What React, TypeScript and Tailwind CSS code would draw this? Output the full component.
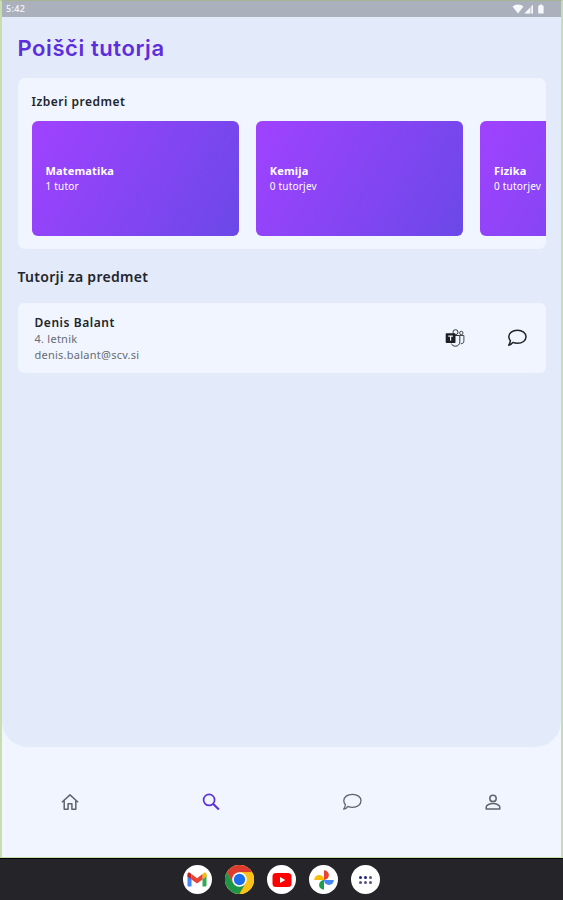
import React from 'react';

interface Subject {
  name: string;
  tutors: string;
}

const subjects: Subject[] = [
  { name: 'Matematika', tutors: '1 tutor' },
  { name: 'Kemija', tutors: '0 tutorjev' },
  { name: 'Fizika', tutors: '0 tutorjev' },
];

function ChatIcon({ className }: { className?: string }) {
  return (
    <svg viewBox="0 0 20 18" className={className} fill="none" stroke="currentColor" strokeLinejoin="round">
      <path d="M10.400 1.300c5 0 8.600 2.700 8.600 6.500s-3.600 6.500-8.600 6.500c-1.700 0-3.200-.3-4.500-.9-.9 1.400-2.200 2.400-4.200 2.800.9-1.300 1.500-2.700 1.700-4.500-1-1.100-1.600-2.400-1.600-3.900 0-3.800 3.600-6.500 8.600-6.500Z" />
    </svg>
  );
}

function TeamsIcon() {
  return (
    <svg viewBox="0 0 20 18" className="h-[18px] w-5 text-[#33363b]" fill="none" stroke="currentColor">
      <circle cx="10.500" cy="3.200" r="2.500" strokeWidth="1" />
      <circle cx="16.300" cy="4" r="1.700" strokeWidth=".9" />
      <path d="M10 6.500h4.800v6.200c0 2.700-1.700 4.500-4.400 4.500-2 0-3.400-1-4-2.600" strokeWidth="1" />
      <path d="M15 6.500h3.900v5.400c0 1.900-1.300 3-3.200 2.800" strokeWidth=".9" />
      <rect x="0.700" y="4.300" width="9.800" height="9.800" rx="0.800" fill="#1d1f23" stroke="none" />
      <path d="M3.300 7.100h4.600M5.600 7.100v4.700" stroke="#f0f5ff" strokeWidth="1.200" />
    </svg>
  );
}

function HomeIcon() {
  return (
    <svg viewBox="0 0 18 18" className="h-[18px] w-[18px]" fill="none" stroke="currentColor" strokeWidth="1.500">
      <path d="M.9 9.200 9 1.900l8.100 7.300M3.200 7.800v8.400h3.900v-5.400h3.800v5.400h3.900V7.800" strokeLinejoin="round" />
    </svg>
  );
}

function SearchIcon() {
  return (
    <svg viewBox="0 0 18 18" className="h-[18px] w-[18px]" fill="none" stroke="currentColor">
      <circle cx="7.100" cy="6.900" r="5.500" strokeWidth="1.700" />
      <path d="m11 10.800 5.900 5.800" strokeWidth="2.100" />
    </svg>
  );
}

function PersonIcon() {
  return (
    <svg viewBox="0 0 18 18" className="h-[18px] w-[18px]" fill="none" stroke="currentColor" strokeWidth="1.500">
      <circle cx="9" cy="5.400" r="3.200" />
      <path d="M2.200 15.900v-1.800c0-2.400 4-3.500 6.800-3.500s6.800 1.100 6.800 3.500v1.800Z" strokeLinejoin="round" />
    </svg>
  );
}

function StatusBar() {
  return (
    <div className="flex h-4 shrink-0 items-center justify-between bg-[#abb0bd] pr-[15px] pl-1 text-[#f7f8fb]">
      <span className="text-[9px] leading-4 font-medium tracking-[0.300px]">5:42</span>
      <svg viewBox="0 0 34 10" className="h-[10px] w-[34px]" fill="currentColor">
        <path d="M.500 2.600C3.600-.1 8.400-.1 11.500 2.600L6 9.400Z" />
        <path d="M21 .7v8.700h-8.600Z" fillOpacity=".45" />
        <path d="M18 3.700v5.700h-5.600Z" />
        <path d="M19.500 2.200 21 .7v8.700h-1.500Z" />
        <path d="M26.200 1.500h1.500V.5h2.400v1h1.500v8h-5.400Z" />
      </svg>
    </div>
  );
}

function SubjectCard({ subject }: { subject: Subject }) {
  return (
    <div className="flex h-[115px] w-[207.500px] shrink-0 flex-col justify-center rounded-[6px] bg-linear-[120deg,#a042ff,#6b48e8] pl-[14px] text-white">
      <div className="text-[11px] leading-[15px] font-bold tracking-[0.150px]">{subject.name}</div>
      <div className="text-[10px] leading-4 tracking-[0.200px]">{subject.tutors}</div>
    </div>
  );
}

function BottomNav() {
  return (
    <nav className="-mx-0.5 grid h-[109px] shrink-0 grid-cols-4 place-items-center text-[#5f646c]">
      <HomeIcon />
      <span className="text-[#5a32d8]">
        <SearchIcon />
      </span>
      <ChatIcon className="h-[18px] w-5 stroke-[1.300]" />
      <PersonIcon />
    </nav>
  );
}

function DockApp({ children }: { children: React.ReactNode }) {
  return <div className="flex h-[29px] w-[29px] items-center justify-center rounded-full bg-white">{children}</div>;
}

function Dock() {
  return (
    <div className="flex h-[42px] items-center justify-center gap-[13.200px] border-t border-black bg-[#252529]">
      <DockApp>
        <svg viewBox="0 0 20 15" className="h-[15px] w-5">
          <path d="M.500 2.500v10.700c0 .8.500 1.300 1.300 1.300h2.700V6Z" fill="#4285f4" />
          <path d="M19.500 2.500v10.700c0 .8-.5 1.300-1.300 1.300h-2.700V6Z" fill="#34a853" />
          <path d="M15.500 2 17 .9c1.100-.8 2.500 0 2.500 1.300v2.300l-4 3Z" fill="#fbbc04" />
          <path d="M4.500 2 3 .9C1.900.1.500.9.500 2.200v2.300l4 3Z" fill="#c5221f" />
          <path d="M4.500 2v5.500l5.500 4.100 5.500-4.100V2L10 6.200Z" fill="#ea4335" />
        </svg>
      </DockApp>
      <DockApp>
        <svg viewBox="0 0 48 48" className="h-[29px] w-[29px]">
          <circle cx="24" cy="24" r="24" fill="#fbc116" />
          <path d="M24 12h20.800A24 24 0 0 0 3.200 12L13.600 30Z" fill="#dc3c2e" />
          <path d="M34.400 30 24 48A24 24 0 0 1 3.200 12l10.400 18Z" fill="#1e9648" />
          <path d="M24 12h20.800A24 24 0 0 1 24 48l10.400-18Z" fill="#fbc116" />
          <circle cx="24" cy="24" r="12" fill="#fff" />
          <circle cx="24" cy="24" r="9.400" fill="#1a6fe8" />
        </svg>
      </DockApp>
      <DockApp>
        <svg viewBox="0 0 20 14" className="h-[14px] w-5">
          <rect x=".500" width="19" height="14" rx="3.500" fill="#ff0000" />
          <path d="m8 4 5.300 3L8 10Z" fill="#fff" />
        </svg>
      </DockApp>
      <DockApp>
        <svg viewBox="0 0 20 20" className="h-5 w-5">
          <path d="M10 10V.2a4.900 4.900 0 0 1 4.900 4.900A4.900 4.900 0 0 1 10 10Z" fill="#ea4335" />
          <path d="M10 10h9.800a4.900 4.900 0 0 1-9.800 0Z" fill="#4285f4" />
          <path d="M10 10v9.800a4.900 4.900 0 0 1 0-9.800Z" fill="#1e9e48" />
          <path d="M10 10H.2a4.900 4.900 0 0 1 9.800 0Z" fill="#fbbc04" />
        </svg>
      </DockApp>
      <DockApp>
        <div className="grid grid-cols-3 gap-[2px]">
          <i className="h-[3px] w-[3px] rounded-full bg-[#202080]" />
          <i className="h-[3px] w-[3px] rounded-full bg-[#202080]" />
          <i className="h-[3px] w-[3px] rounded-full bg-[#55557d]" />
          <i className="h-[3px] w-[3px] rounded-full bg-[#55557d]" />
          <i className="h-[3px] w-[3px] rounded-full bg-[#55557d]" />
          <i className="h-[3px] w-[3px] rounded-full bg-[#55557d]" />
        </div>
      </DockApp>
    </div>
  );
}

export default function App() {
  return (
    <div className="flex h-[900px] w-[563px] flex-col overflow-hidden bg-[#252529] font-['Noto_Sans',sans-serif] text-[#22252b]">
      <div className="flex h-[858px] flex-col border-x-2 border-t border-b border-[#c8deb0] border-t-[#a8b594] bg-[#f0f5ff]">
        <div className="flex h-[746px] flex-col overflow-hidden rounded-b-[26px] bg-[#e3eafa]">
          <StatusBar />
          <main className="px-[15.500px]">
            <h1 className="mt-[15px] font-['Inter',sans-serif] text-[22px] leading-8 font-semibold tracking-[0.580px] text-[#5f2edc]">
              Poišči tutorja
            </h1>

            <section className="mt-[14px] h-[171px] overflow-hidden rounded-[7px] bg-[#f0f5ff] pt-[15px] pl-[14px]">
              <h2 className="text-[12px] leading-[18px] font-semibold tracking-[0.500px]">Izberi predmet</h2>
              <div className="mt-[10px] flex gap-[16.800px] overflow-hidden">
                {subjects.map((subject) => (
                  <SubjectCard key={subject.name} subject={subject} />
                ))}
              </div>
            </section>

            <h2 className="mt-[18px] text-[14px] leading-5 font-semibold tracking-[0.280px]">Tutorji za predmet</h2>

            <section className="mt-[16px] flex h-[70px] items-center justify-between rounded-[6px] bg-[#f0f5ff] pr-[19px] pl-[17px]">
              <div className="pt-0.5">
                <div className="text-[12px] leading-4 font-semibold tracking-[0.550px]">Denis Balant</div>
                <div className="text-[11px] leading-4 tracking-[0.250px] text-[#686c74]">4. letnik</div>
                <div className="text-[11px] leading-4 tracking-[0.250px] text-[#686c74]">denis.balant@scv.si</div>
              </div>
              <div className="flex items-center gap-[42px]">
                <TeamsIcon />
                <ChatIcon className="h-[18px] w-5 stroke-[1.500] text-[#202226]" />
              </div>
            </section>
          </main>
        </div>
        <BottomNav />
      </div>
      <Dock />
    </div>
  );
}
